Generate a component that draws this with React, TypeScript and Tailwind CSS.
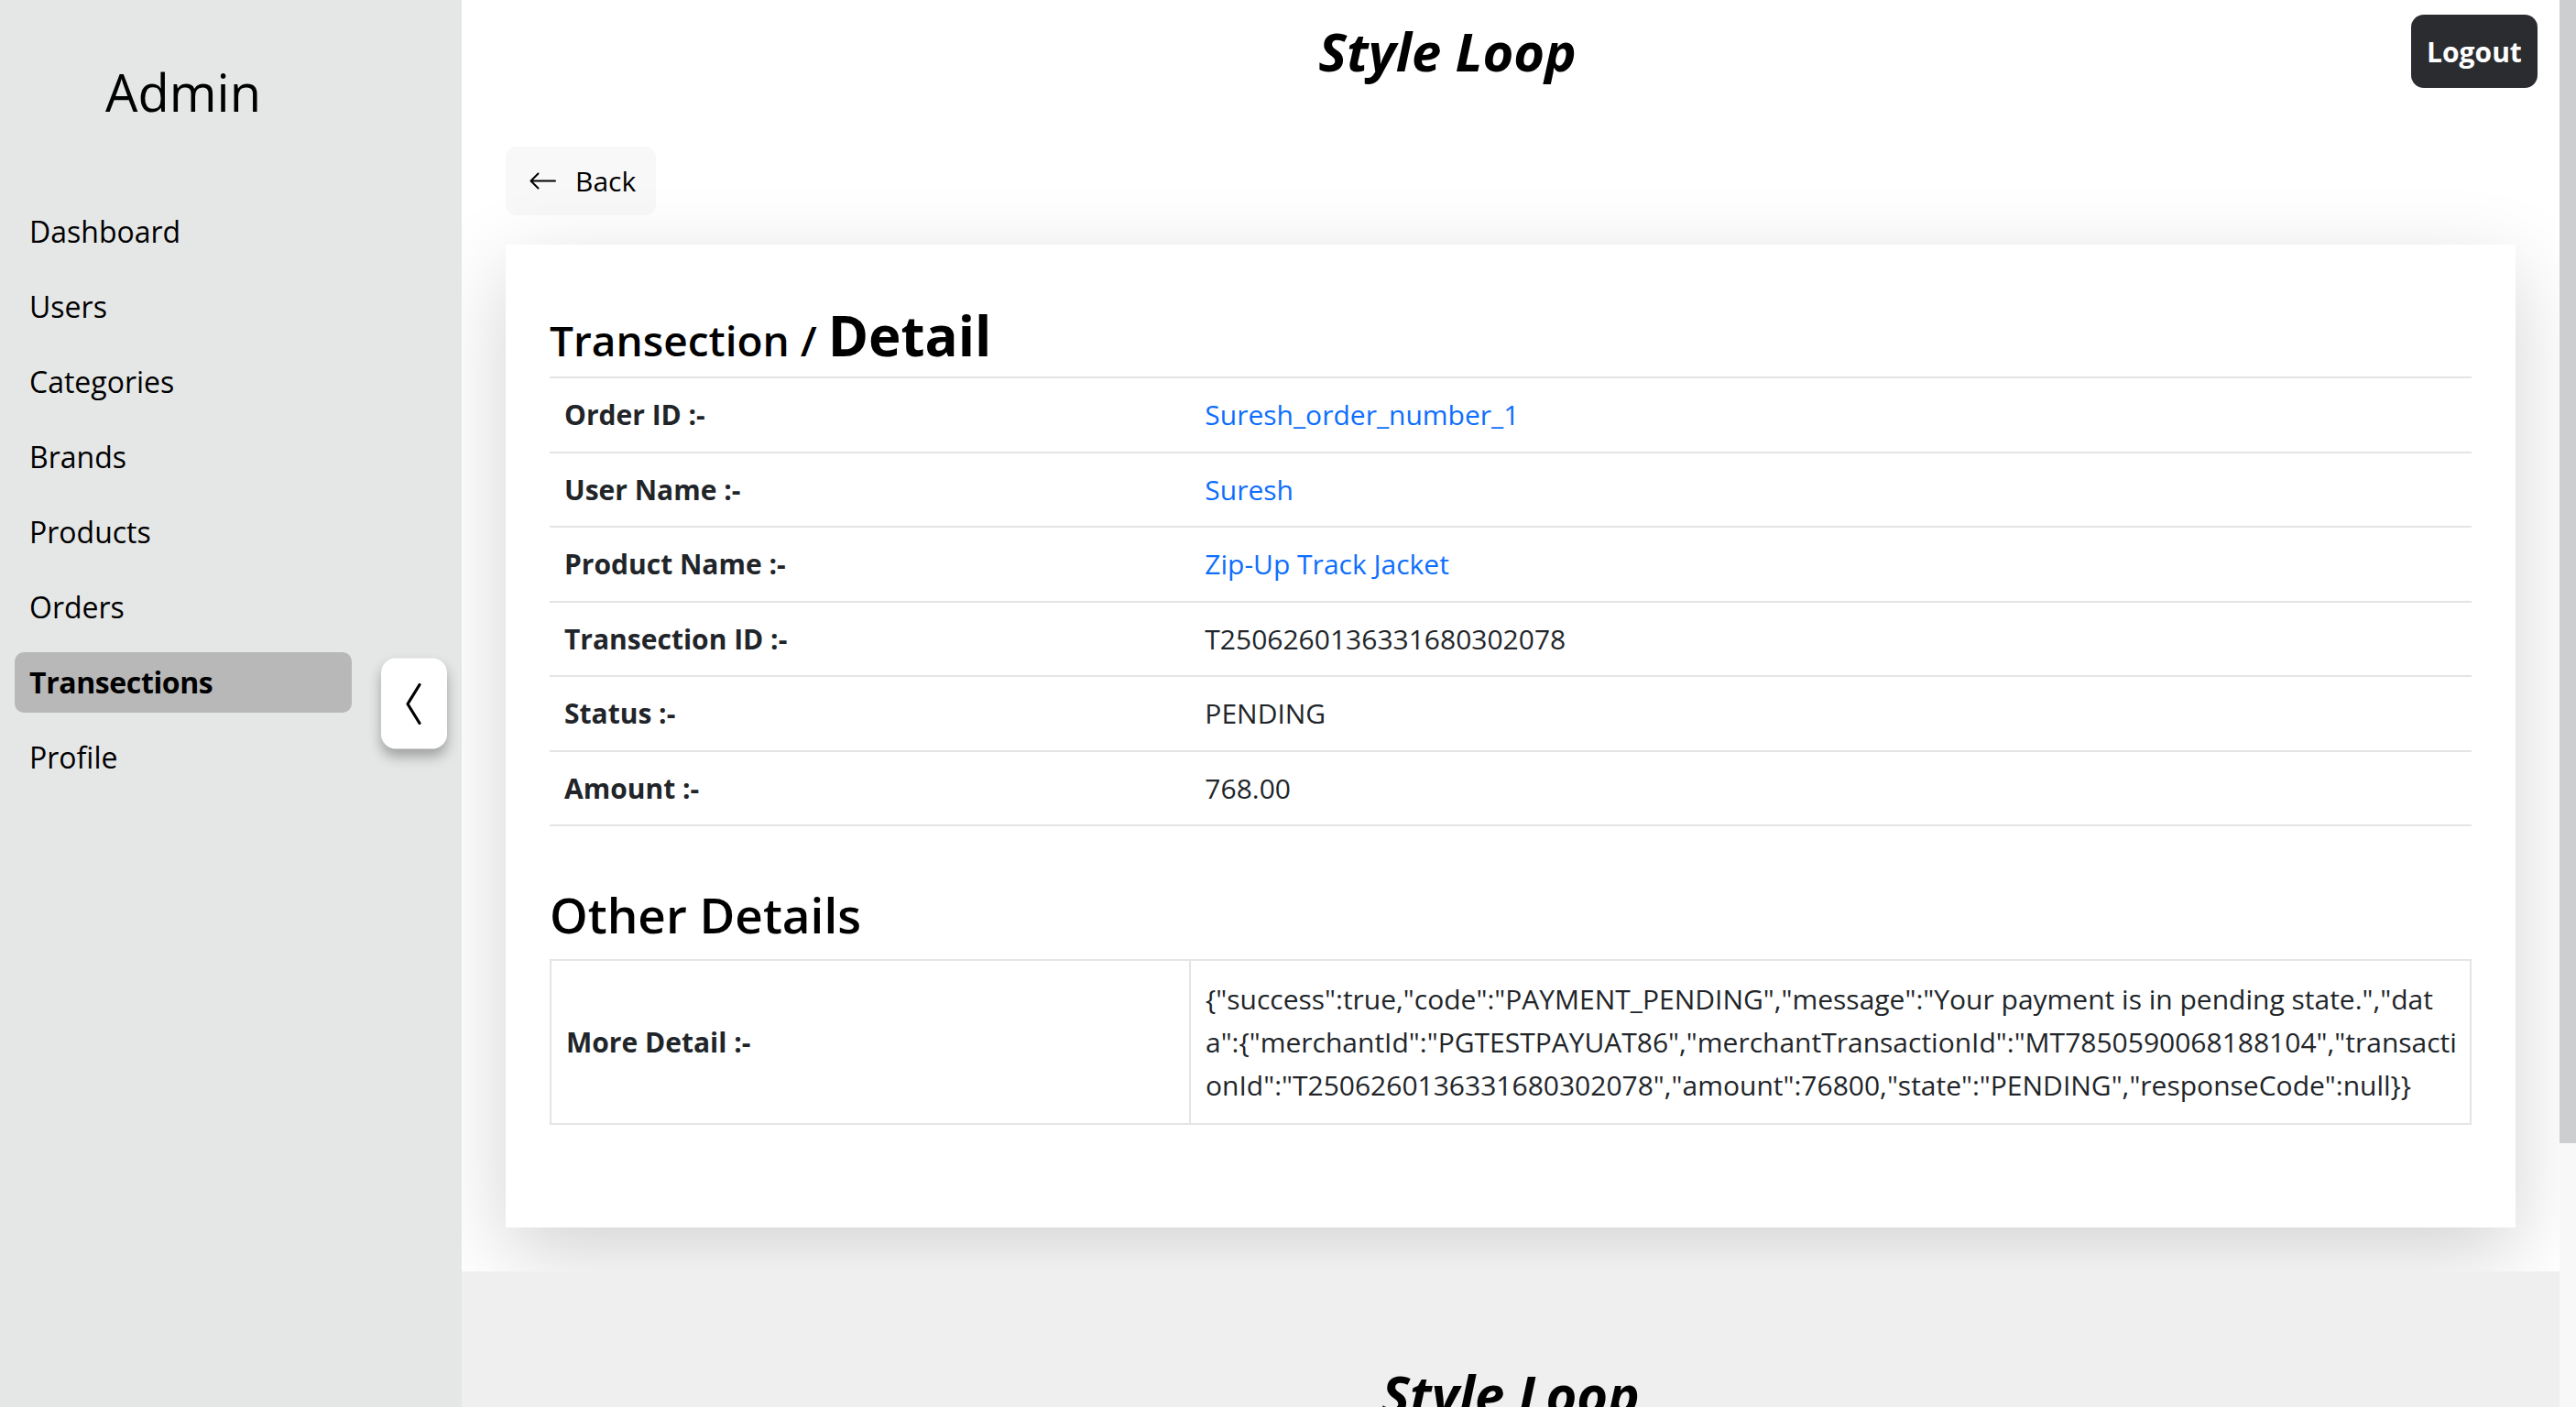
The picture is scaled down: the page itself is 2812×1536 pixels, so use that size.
import React from "react";

const navItems = ["Dashboard", "Users", "Categories", "Brands", "Products", "Orders", "Transections", "Profile"];

const details: { label: string; value: string; link?: boolean }[] = [
  { label: "Order ID :-", value: "Suresh_order_number_1", link: true },
  { label: "User Name :-", value: "Suresh", link: true },
  { label: "Product Name :-", value: "Zip-Up Track Jacket", link: true },
  { label: "Transection ID :-", value: "T2506260136331680302078" },
  { label: "Status :-", value: "PENDING" },
  { label: "Amount :-", value: "768.00" },
];

// raw gateway response, broken where the cell wraps it
const moreDetailLines = [
  '{"success":true,"code":"PAYMENT_PENDING","message":"Your payment is in pending state.","dat',
  'a":{"merchantId":"PGTESTPAYUAT86","merchantTransactionId":"MT7850590068188104","transacti',
  'onId":"T2506260136331680302078","amount":76800,"state":"PENDING","responseCode":null}}',
];

function Sidebar() {
  return (
    <aside className="relative h-full w-[504px] shrink-0 bg-[#e5e6e6]">
      <div className="w-[400px]">
        <h1 className="pt-[67px] text-center text-[56px] leading-[1.2] font-normal">Admin</h1>
        <nav className="mt-[86px] flex flex-col gap-4 px-4">
          {navItems.map((item) => {
            const active = item === "Transections";
            return (
              <a
                key={item}
                href="#"
                className={
                  active
                    ? "flex h-[66px] items-center rounded-[10px] bg-[#b8b8b8] px-4 text-[32px] font-bold tracking-[-0.4px]"
                    : "flex h-[66px] items-center rounded-[10px] px-4 text-[32px]"
                }
              >
                {item}
              </a>
            );
          })}
        </nav>
      </div>

      {/* collapse toggle */}
      <button className="absolute right-4 top-1/2 flex h-[99px] w-[72px] -translate-y-1/2 items-center justify-center rounded-[16px] bg-white shadow-[0_8px_14px_rgba(0,0,0,0.3)]">
        <svg width="18" height="46" viewBox="0 0 18 46" fill="none">
          <polyline points="15,2 2,23 15,44" stroke="#000" strokeWidth="3.2" strokeLinecap="round" strokeLinejoin="round" />
        </svg>
      </button>
    </aside>
  );
}

function BackButton() {
  return (
    <button className="flex h-[75px] w-[164px] items-center gap-[21px] rounded-[12px] bg-[#f8f8f8] pl-[26px] text-[30px]">
      <svg width="29" height="19" viewBox="0 0 29 19" fill="none">
        <path d="M28 9.5H1.5M9.5 1.5L1.5 9.5L9.5 17.5" stroke="#000" strokeWidth="2" strokeLinecap="round" strokeLinejoin="round" />
      </svg>
      <span>Back</span>
    </button>
  );
}

function DetailCard() {
  return (
    <div className="mt-8 bg-white px-12 pt-[63px] pb-12 shadow-[0_29px_86px_rgba(0,0,0,0.175)]">
      <h3 className="text-[46px] leading-[1.2] font-semibold">
        Transection / <span className="text-[60px] font-bold">Detail</span>
      </h3>

      <div className="mt-[9px] border-t-2 border-[#e3e4e5] text-[30px] leading-[43.5px] text-[#212529]">
        {details.map((d) => (
          <div key={d.label} className="grid grid-cols-3 border-b-2 border-[#e3e4e5]">
            <div className="px-4 py-[18px] font-bold">{d.label}</div>
            <div className={d.link ? "col-span-2 px-4 py-[18px] text-[#0d6efd]" : "col-span-2 px-4 py-[18px]"}>{d.value}</div>
          </div>
        ))}
      </div>

      <h2 className="mt-[65px] mb-4 text-[53px] leading-[1.2] font-semibold">Other Details</h2>

      <div className="mb-16 grid grid-cols-3 border-2 border-[#e3e4e5] text-[30px] text-[#212529]">
        <div className="flex items-center border-r-2 border-[#e3e4e5] px-4 font-bold">More Detail :-</div>
        <div className="col-span-2 px-4 py-[18px] leading-[47px]">
          {moreDetailLines.map((line) => (
            <div key={line} className="whitespace-nowrap">
              {line}
            </div>
          ))}
        </div>
      </div>
    </div>
  );
}

export default function App() {
  return (
    <div className="flex h-screen overflow-hidden bg-white font-['Open_Sans',sans-serif] text-black">
      <Sidebar />

      <div className="h-full flex-1 overflow-hidden">
        <main className="bg-white pb-12">
          <header className="flex items-center justify-between px-6 py-4">
            <div />
            <h1 className="text-[58px] leading-[1.2] font-bold italic">Style Loop</h1>
            <button className="flex h-[80px] w-[138px] items-center justify-center rounded-[14px] bg-[#2b2c30] text-[30px] font-bold text-white">
              Logout
            </button>
          </header>

          <div className="px-12">
            <div className="mt-12">
              <BackButton />
            </div>
            <DetailCard />
          </div>
        </main>

        <footer className="bg-[#efefef] pt-[99px] pb-24 text-center">
          <h2 className="text-[58px] leading-[1.2] font-bold italic">Style Loop</h2>
        </footer>
      </div>

      {/* page scrollbar */}
      <div className="h-full w-[18px] shrink-0 bg-[#f8f8f8]">
        <div className="h-[1248px] bg-[#cdcecf]" />
      </div>
    </div>
  );
}
